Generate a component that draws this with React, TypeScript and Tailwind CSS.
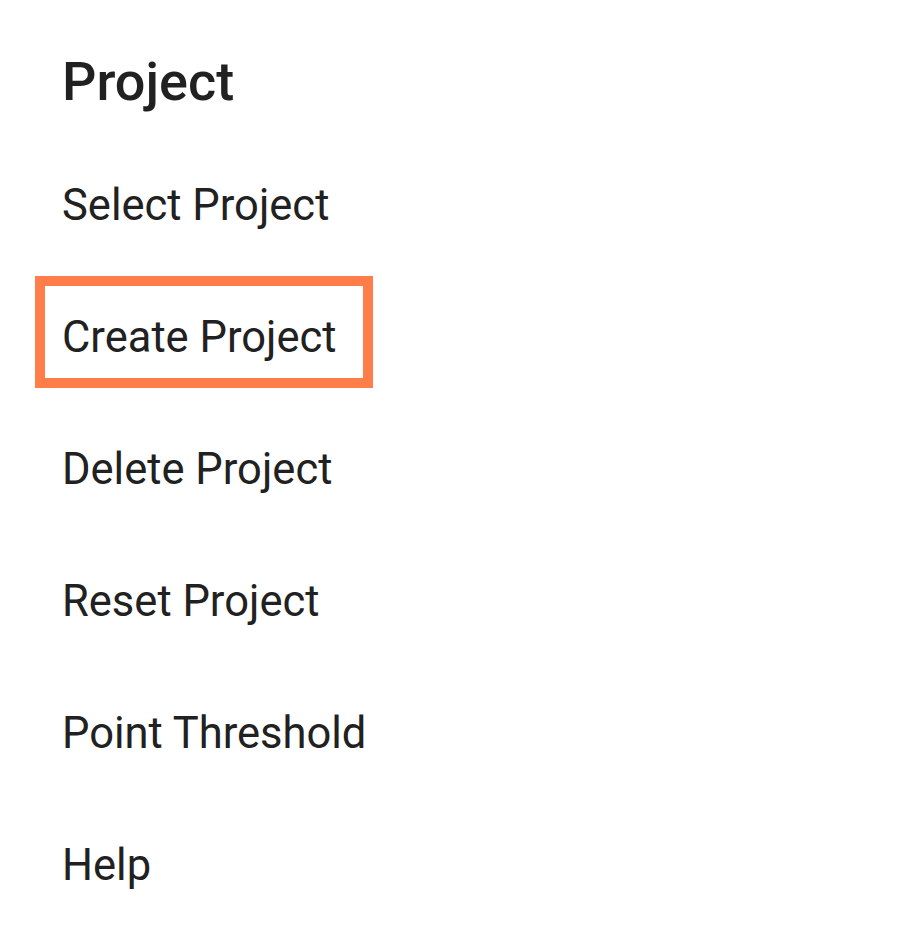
import React from "react";

const items = [
  "Select Project",
  "Create Project",
  "Delete Project",
  "Reset Project",
  "Point Threshold",
  "Help",
];

export default function App() {
  return (
    <div
      className="w-[922px] h-[942px] bg-white text-[#212121] pl-[62px]"
      style={{ fontFamily: "Roboto, 'Noto Sans', sans-serif" }}
    >
      <div className="h-[140px] pt-[55px]">
        <div className="text-[54px] leading-none font-medium">Project</div>
      </div>
      <div className="flex flex-col">
        {items.map((t) => (
          <div key={t} className="h-[132px] flex items-center">
            {t === "Create Project" ? (
              <div className="relative">
                <span className="text-[43.5px] leading-none">{t}</span>
                <div className="absolute left-[-27px] right-[-36px] top-[-40px] bottom-[-28px] border-[10px] border-[#ff7d48]" />
              </div>
            ) : (
              <span className="text-[43.5px] leading-none">{t}</span>
            )}
          </div>
        ))}
      </div>
    </div>
  );
}
